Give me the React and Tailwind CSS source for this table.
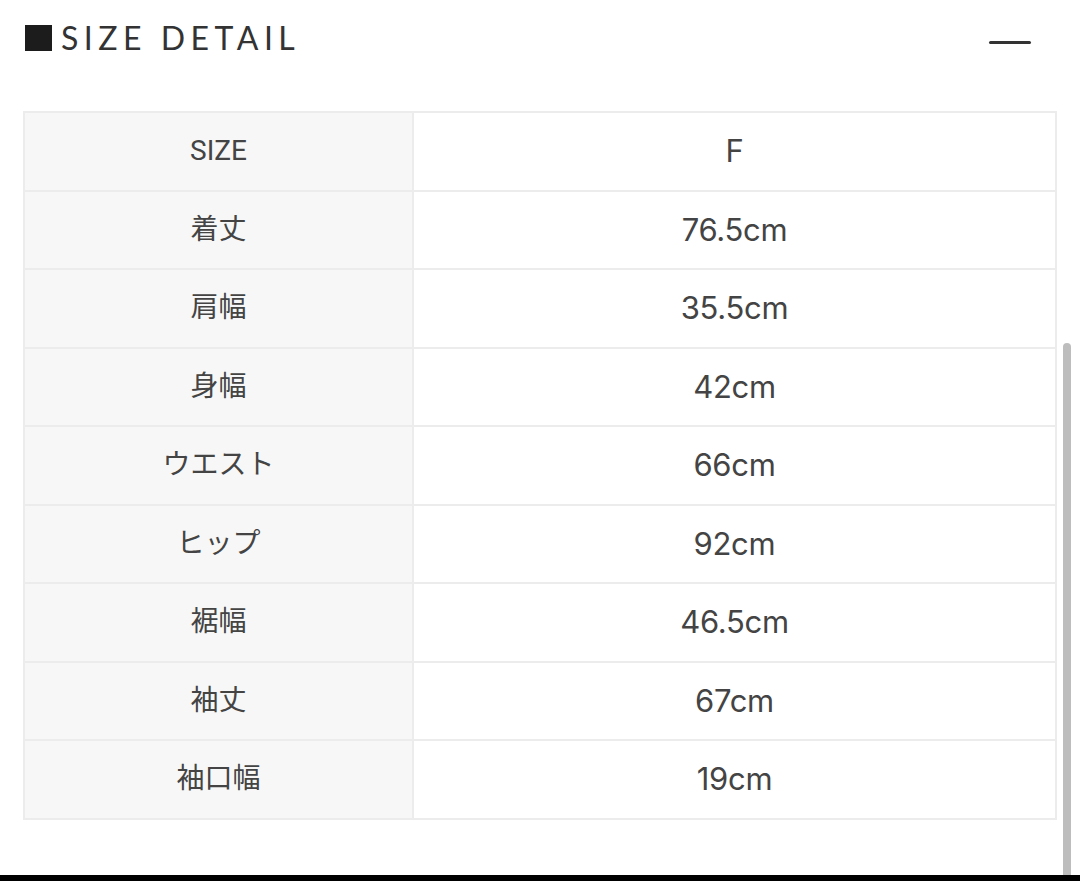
import React from "react";

const rows = [
  ["SIZE", "F"],
  ["着丈", "76.5cm"],
  ["肩幅", "35.5cm"],
  ["身幅", "42cm"],
  ["ウエスト", "66cm"],
  ["ヒップ", "92cm"],
  ["裾幅", "46.5cm"],
  ["袖丈", "67cm"],
  ["袖口幅", "19cm"],
];

export default function App() {
  return (
    <div className="relative flex h-[881px] w-[1080px] flex-col overflow-hidden bg-white">
      {/* HEADER */}
      <div className="flex h-[80px] items-start justify-between pl-[25px] pr-[49px] pt-[24px]">
        <div className="flex items-center">
          <div className="h-[26px] w-[27px] bg-[#1c1c1c]" />
          <span className="ml-[9px] font-['Lato','Noto_Sans_CJK_JP',sans-serif] text-[32px] font-normal leading-[28px] tracking-[5.5px] text-[#333]">
            SIZE DETAIL
          </span>
        </div>
        <div className="mt-[17px] h-[3px] w-[42px] rounded-full bg-[#333]" />
      </div>

      {/* TABLE */}
      <div className="ml-[23px] mt-[31px] w-[1034px] border-l-2 border-t-2 border-[#ececec]">
        {rows.map(([label, value], i) => (
          <div key={i} className="flex h-[78.5px]">
            <div className="flex w-[389px] items-center justify-center border-b-2 border-r-2 border-[#ececec] bg-[#f7f7f7] font-['Roboto','Noto_Sans_CJK_JP',sans-serif] text-[28px] text-[#444]">
              {label}
            </div>
            <div className="flex flex-1 items-center justify-center border-b-2 border-r-2 border-[#ececec] font-['Inter','Noto_Sans_CJK_JP',sans-serif] text-[31px] tracking-[-0.3px] text-[#444]">
              {value}
            </div>
          </div>
        ))}
      </div>

      {/* SCROLLBAR */}
      <div className="absolute right-[9px] top-[343px] h-[540px] w-[8px] rounded-t-full bg-[#bdbdbd]" />

      {/* BOTTOM BAR */}
      <div className="relative mt-auto h-[6px] w-full bg-black" />
    </div>
  );
}
